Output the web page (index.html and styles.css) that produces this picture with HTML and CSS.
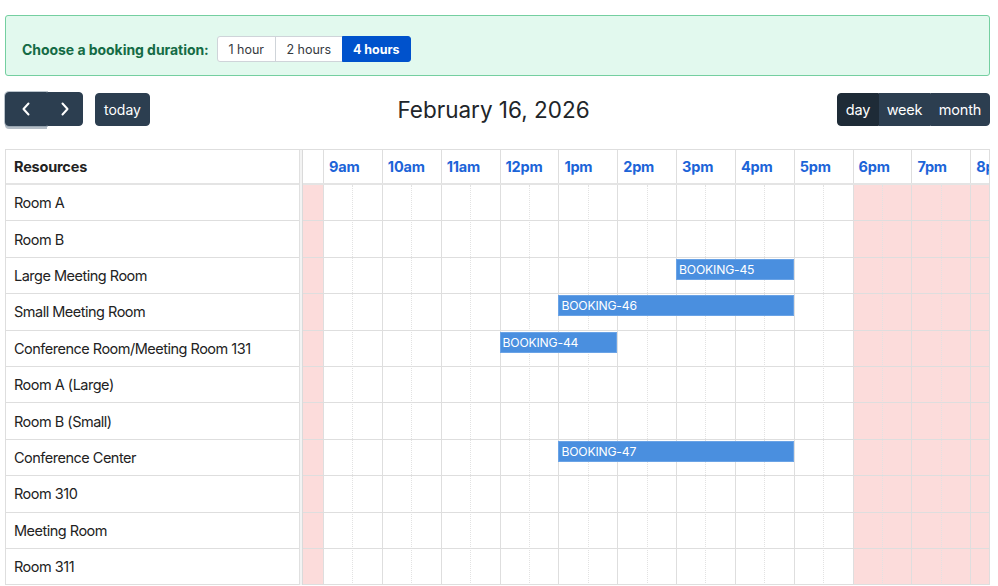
FILE: index.html
```html
<!DOCTYPE html>
<html>
<head>
<meta charset="utf-8">
<link rel="stylesheet" href="styles.css">
</head>
<body>
<div class="page">
  <div class="banner">
    <span class="banner-label">Choose a booking duration:</span>
    <div class="dur-group">
      <button class="dur">1 hour</button>
      <button class="dur">2 hours</button>
      <button class="dur active">4 hours</button>
    </div>
  </div>

  <div class="toolbar">
    <div class="tb-left">
      <div class="btn-group">
        <button class="btn nav prev"><svg width="10" height="16" viewBox="0 0 10 16"><path d="M7.5 2.5 L2.5 8 L7.5 13.5" fill="none" stroke="#fff" stroke-width="2" stroke-linecap="round" stroke-linejoin="round"/></svg></button>
        <button class="btn nav next"><svg width="10" height="16" viewBox="0 0 10 16"><path d="M2.5 2.5 L7.5 8 L2.5 13.5" fill="none" stroke="#fff" stroke-width="2" stroke-linecap="round" stroke-linejoin="round"/></svg></button>
      </div>
      <button class="btn today">today</button>
    </div>
    <h2 class="title">February 16, 2026</h2>
    <div class="btn-group views">
      <button class="btn view active">day</button>
      <button class="btn view">week</button>
      <button class="btn view">month</button>
    </div>
  </div>

  <div class="grid">
    <div class="res-col">
      <div class="res-head">Resources</div>
      <div class="res-row">Room A</div>
      <div class="res-row">Room B</div>
      <div class="res-row">Large Meeting Room</div>
      <div class="res-row">Small Meeting Room</div>
      <div class="res-row">Conference Room/Meeting Room 131</div>
      <div class="res-row">Room A (Large)</div>
      <div class="res-row">Room B (Small)</div>
      <div class="res-row">Conference Center</div>
      <div class="res-row">Room 310</div>
      <div class="res-row">Meeting Room</div>
      <div class="res-row">Room 311</div>
    </div>
    <div class="divider"></div>
    <div class="time-col">
      <div class="time-head">
        <div class="th pre"></div>
        <div class="th hour">9am</div>
        <div class="th hour">10am</div>
        <div class="th hour">11am</div>
        <div class="th hour">12pm</div>
        <div class="th hour">1pm</div>
        <div class="th hour">2pm</div>
        <div class="th hour">3pm</div>
        <div class="th hour">4pm</div>
        <div class="th hour">5pm</div>
        <div class="th hour">6pm</div>
        <div class="th hour">7pm</div>
        <div class="th hour">8pm</div>
      </div>
      <div class="time-body">
        <div class="slots">
          <div class="slot pre off"></div>
          <div class="slot major"></div><div class="slot minor"></div>
          <div class="slot major"></div><div class="slot minor"></div>
          <div class="slot major"></div><div class="slot minor"></div>
          <div class="slot major"></div><div class="slot minor"></div>
          <div class="slot major"></div><div class="slot minor"></div>
          <div class="slot major"></div><div class="slot minor"></div>
          <div class="slot major"></div><div class="slot minor"></div>
          <div class="slot major"></div><div class="slot minor"></div>
          <div class="slot major"></div><div class="slot minor"></div>
          <div class="slot major off"></div><div class="slot minor off"></div>
          <div class="slot major off"></div><div class="slot minor off"></div>
          <div class="slot major off"></div><div class="slot minor off"></div>
        </div>
        <div class="lanes">
          <div class="lane"></div>
          <div class="lane"></div>
          <div class="lane"><div class="event" style="left:373.1px;width:117.7px">BOOKING-45</div></div>
          <div class="lane"><div class="event" style="left:255.4px;width:235.4px">BOOKING-46</div></div>
          <div class="lane"><div class="event" style="left:196.55px;width:117.7px">BOOKING-44</div></div>
          <div class="lane"></div>
          <div class="lane"></div>
          <div class="lane"><div class="event" style="left:255.4px;width:235.4px">BOOKING-47</div></div>
          <div class="lane"></div>
          <div class="lane"></div>
          <div class="lane"></div>
        </div>
      </div>
    </div>
  </div>
</div>
</body>
</html>
```

FILE: styles.css
```css
* { box-sizing: border-box; }
html, body { margin: 0; padding: 0; background: #fff; }
body {
  font-family: Inter, "Noto Sans", "Liberation Sans", sans-serif;
  color: #212529;
  width: 998px;
  height: 586px;
  overflow: hidden;
}
.page { padding: 15px 8px 0 5px; }

/* banner */
.banner {
  height: 61px;
  border: 1px solid #74cfa0;
  background: #e2f9ee;
  border-radius: 3px;
  display: flex;
  align-items: center;
  padding-left: 16px;
  padding-top: 7px;
  gap: 8px;
}
.banner-label {
  font-size: 14px;
  font-weight: 700;
  color: #146b45;
  letter-spacing: -0.05px;
}
.dur-group { display: flex; }
.dur {
  font-family: inherit;
  height: 26px;
  border: 1px solid #cfd4d9;
  background: #fff;
  color: #343a40;
  font-size: 12.5px;
  padding: 0;
  margin: 0;
  margin-left: -1px;
}
.dur:nth-child(1) { width: 59px; margin-left: 0; border-radius: 3px 0 0 3px; }
.dur:nth-child(2) { width: 68px; }
.dur:nth-child(3) { width: 69px; border-radius: 0 3px 3px 0; }
.dur.active { background: #0052cc; border-color: #0052cc; color: #fff; font-weight: 700; }

/* toolbar */
.toolbar {
  margin-top: 16px;
  height: 34px;
  display: flex;
  justify-content: space-between;
  align-items: center;
}
.tb-left { display: flex; align-items: center; gap: 12px; }
.btn-group { display: flex; }
.btn {
  font-family: inherit;
  background: #2c3e50;
  border: 1px solid #2c3e50;
  color: #fff;
  font-size: 14px;
  margin: 0;
  padding: 0;
  border-radius: 4px;
  display: flex;
  align-items: center;
  justify-content: center;
}
.nav { height: 34px; }
.prev { width: 42px; border-radius: 4px 0 0 4px; box-shadow: 0 0 0 1px rgba(130,145,160,.55), 0 3px 0 0 rgba(130,145,160,.6); position: relative; z-index: 0; }
.next { width: 36px; border-radius: 0 4px 4px 0; position: relative; z-index: 1; }
.today { width: 55px; height: 33px; }
.title {
  margin: 0;
  font-size: 22.5px;
  font-weight: 400;
  color: #212529;
}
.views .view { height: 33px; border-radius: 0; font-size: 14.5px; letter-spacing: -0.2px; }
.views .view:nth-child(1) { width: 42px; border-radius: 4px 0 0 4px; background: #1e2b37; border-color: #1e2b37; }
.views .view:nth-child(2) { width: 51px; }
.views .view:nth-child(3) { width: 60px; border-radius: 0 4px 4px 0; }

/* grid */
.grid {
  margin-top: 23px;
  width: 985px;
  display: flex;
  border-top: 1px solid #dedede;
  border-left: 1px solid #dedede;
  border-right: 1px solid #dedede;
}
.res-col { width: 293px; flex: none; }
.res-head {
  height: 35px;
  border-bottom: 2px solid #e4e4e4;
  font-size: 14.5px;
  font-weight: 700;
  color: #222;
  padding-left: 8px;
  display: flex;
  align-items: center;
  letter-spacing: -0.2px;
}
.res-row {
  height: 36.4px;
  border-bottom: 1px solid #dedede;
  font-size: 14.5px;
  letter-spacing: -0.5px;
  color: #222;
  padding-left: 8px;
  display: flex;
  align-items: center;
}
.divider {
  width: 4px;
  flex: none;
  border-left: 1px solid #e0e0e0;
  border-right: 1px solid #dadada;
  background: #f3f3f3;
}
.time-col { flex: 1; overflow: hidden; min-width: 0; }
.time-head {
  height: 35px;
  display: flex;
  border-bottom: 2px solid #e4e4e4;
}
.th { flex: none; height: 100%; }
.th.pre { width: 20px; }
.th.hour {
  width: 58.85px;
  border-left: 1px solid #dedede;
  font-size: 14.5px;
  font-weight: 700;
  color: #1c64d8;
  padding-left: 5px;
  display: flex;
  align-items: center;
  white-space: nowrap;
  letter-spacing: -0.2px;
}
.time-body { position: relative; }
.slots {
  position: absolute;
  inset: 0;
  display: flex;
}
.slot { flex: none; width: 29.425px; height: 100%; }
.slot.pre { width: 20px; }
.slot.major { border-left: 1px solid #dedede; }
.slot.minor { border-left: 1px dotted #e2e2e2; }
.slot.off { background: #fcdcdb; }
.lanes { position: relative; }
.lane {
  height: 36.4px;
  border-bottom: 1px solid #dedede;
  position: relative;
}
.event {
  position: absolute;
  top: 1px;
  height: 21px;
  background: #4a8fdf;
  border: 1px solid #6aa3e6;
  color: #fff;
  font-size: 12.2px;
  letter-spacing: -0.2px;
  padding-left: 2px;
  display: flex;
  align-items: center;
  white-space: nowrap;
  overflow: hidden;
}
```
